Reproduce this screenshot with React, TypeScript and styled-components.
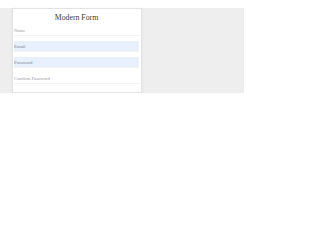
import React from "react";
import styled, { createGlobalStyle } from "styled-components";

const Global = createGlobalStyle`
  html, body { margin: 0; padding: 0; background: #ffffff; }
  body { font-family: "Liberation Serif", "Times New Roman", serif; }
`;

const Stage = styled.div`
  margin-top: 8px;
  width: 244px;
  height: 85px;
  background: #eeeeee;
  padding-left: 12px;
  box-sizing: border-box;
  display: flex;
`;

const Card = styled.form`
  width: 130px;
  height: 85px;
  box-sizing: border-box;
  background: #ffffff;
  border: 1px solid #e2e2e2;
  box-shadow: 0 0 2px rgba(0, 0, 0, 0.06);
  padding: 4px 2px 0 1px;
  display: flex;
  flex-direction: column;
  gap: 5px;
`;

const Title = styled.h2`
  margin: 0 0 -3px 0;
  height: 10px;
  line-height: 10px;
  font-size: 7.8px;
  font-weight: normal;
  text-align: center;
  color: #3a3a3a;
`;

const Field = styled.input<{ $filled?: boolean }>`
  display: block;
  width: 125px;
  height: 11px;
  box-sizing: border-box;
  margin: 0;
  padding: 0;
  border: none;
  border-bottom: 1px solid #f3f3f3;
  outline: none;
  border-radius: 0;
  background: ${(p) => (p.$filled ? "#e8f0fe" : "#ffffff")};
  font-family: "Liberation Serif", "Times New Roman", serif;
  font-size: 4.8px;
  color: #888888;
  &::placeholder {
    color: ${(p) => (p.$filled ? "#80858e" : "#9a9a9a")};
  }
`;

export default function App() {
  return (
    <>
      <Global />
      <Stage>
        <Card onSubmit={(e) => e.preventDefault()}>
          <Title>Modern Form</Title>
          <Field type="text" placeholder="Name" />
          <Field type="email" placeholder="Email" $filled />
          <Field type="password" placeholder="Password" $filled />
          <Field type="password" placeholder="Confirm Password" />
        </Card>
      </Stage>
    </>
  );
}
